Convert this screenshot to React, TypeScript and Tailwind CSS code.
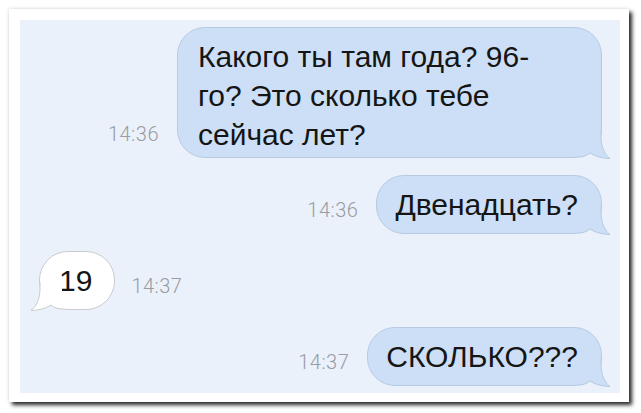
import React from "react";

const font = { fontFamily: '"Liberation Sans", Arial, sans-serif' };

function Tail({ side, fill, stroke }: { side: "left" | "right"; fill: string; stroke: string }) {
  const outer = "M22,0 L22,6 C22,16 25,24 31,28.5 C24,28.5 16,26.5 11,23 C8,25.5 4,27 0,27";
  return (
    <svg
      width="36"
      height="30"
      viewBox="0 0 36 30"
      className={
        side === "right"
          ? "absolute right-[-14px] bottom-[-3px]"
          : "absolute left-[-14px] bottom-[-3px] -scale-x-100"
      }
    >
      <path d={outer + " L0,0 Z"} fill={fill} />
      <path d={outer} fill="none" stroke={stroke} strokeWidth="1" />
    </svg>
  );
}

function Time({ children }: { children: React.ReactNode }) {
  return (
    <span
      className="mb-[13px] text-[20px] leading-[22px] font-light tracking-[0.5px] text-[#999ca1]"
      style={{ fontFamily: "Roboto, sans-serif" }}
    >
      {children}
    </span>
  );
}

function Sent({ time, children, className = "" }: { time: string; children: React.ReactNode; className?: string }) {
  return (
    <div className="flex items-end justify-end gap-[18px]">
      <Time>{time}</Time>
      <div
        className={`relative rounded-[28px] border border-[#b7cae3] bg-[#cddff6] pl-[18px] pr-[23px] text-[30px] leading-[39px] text-[#151515] ${className}`}
        style={font}
      >
        {children}
        <Tail side="right" fill="#cddff6" stroke="#b7cae3" />
      </div>
    </div>
  );
}

export default function App() {
  return (
    <div className="min-h-screen bg-white pt-[9px] pl-[9px]">
      <div className="w-[620px] h-[393px] bg-white pt-[11px] pl-[11px] pr-[9px] pb-[9px] shadow-[3px_3px_4px_rgba(0,0,0,0.85),-1px_-1px_3px_rgba(0,0,0,0.08)]">
        <div className="h-full bg-[#eaf1fb] pt-[7px] pl-[19px] pr-[18px] flex flex-col gap-[17px]">
          <Sent time="14:36" className="w-[425px] pt-[9px] pb-[3px] pl-[20px]">
            <p className="w-[340px]">Какого ты там года? 96-го? Это сколько тебе сейчас лет?</p>
          </Sent>

          <Sent time="14:36" className="py-[9px]">Двенадцать?</Sent>

          <div className="flex items-end gap-[16px]">
            <div
              className="relative rounded-[29px] border border-[#c9cbcf] bg-white pl-[19px] pr-[22px] py-[9px] text-[30px] leading-[39px] text-[#151515]"
              style={font}
            >
              19
              <Tail side="left" fill="#ffffff" stroke="#c9cbcf" />
            </div>
            <Time>14:37</Time>
          </div>

          <Sent time="14:37" className="py-[9px]">СКОЛЬКО???</Sent>
        </div>
      </div>
    </div>
  );
}
